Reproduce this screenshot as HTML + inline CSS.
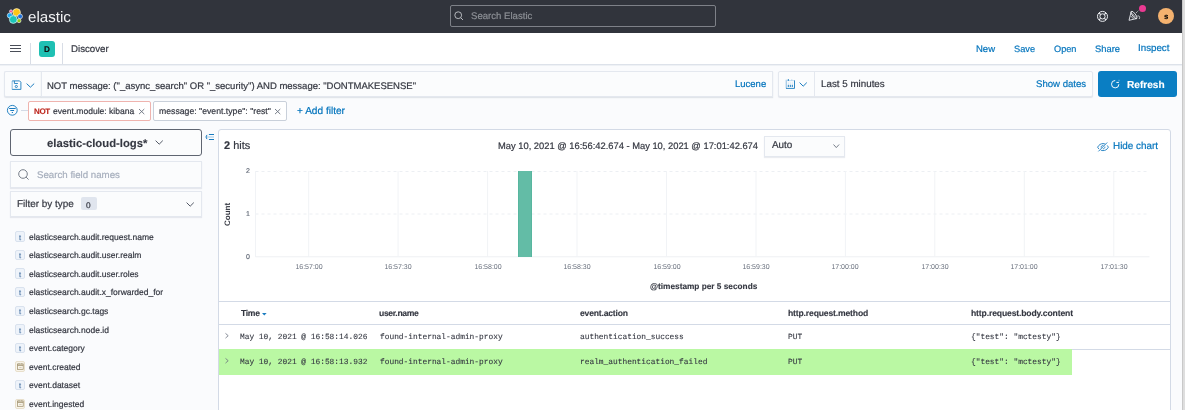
<!DOCTYPE html>
<html><head><meta charset="utf-8">
<style>
*{box-sizing:border-box;margin:0;padding:0}
html,body{width:1185px;height:410px;overflow:hidden;background:#fafbfd;font-family:"Liberation Sans",sans-serif;color:#343741}
.a{position:absolute}
.t{position:absolute;white-space:pre;line-height:1;will-change:transform;text-rendering:geometricPrecision}
svg{position:absolute;overflow:visible}
</style></head><body>
<div class="a" style="left:0px;top:0px;width:1185px;height:33px;background:#31343c;"></div>
<svg style="left:7px;top:8px" width="16" height="16" viewBox="0 0 16 16" stroke="#fff" stroke-width="0.6">
<circle cx="9.65" cy="4.4" r="3.8" fill="#fec514"/>
<circle cx="4" cy="3.3" r="1.5" fill="#f04e98"/>
<circle cx="13.1" cy="8.4" r="2.4" fill="#1f6fd6"/>
<circle cx="12" cy="12.7" r="2" fill="#93c90e"/>
<circle cx="2.9" cy="7.5" r="2.6" fill="#1ba9f5"/>
<circle cx="6.3" cy="11.5" r="3.9" fill="#1cc6b9"/>
</svg>
<div class="t" style="left:28.10px;top:9.72px;font-size:15.1px;color:#f2f3f5;font-weight:400;font-family:'Liberation Sans';-webkit-text-stroke:0.2px #f2f3f5;-webkit-text-stroke:0">elastic</div>
<div class="a" style="left:450px;top:5px;width:266px;height:22px;background:transparent;border:1px solid #7e8188;border-radius:2px"></div>
<svg style="left:454px;top:11px" width="10" height="10" viewBox="0 0 10 10"><circle cx="4.2" cy="4.2" r="3.4" fill="none" stroke="#b5b8bd" stroke-width="1"/><line x1="6.7" y1="6.7" x2="9" y2="9" stroke="#b5b8bd" stroke-width="1"/></svg>
<div class="t" style="left:470.80px;top:11.97px;font-size:9.6px;color:#8c8f95;font-weight:400;font-family:'Liberation Sans';-webkit-text-stroke:0.2px #8c8f95;">Search Elastic</div>
<svg style="left:1096px;top:10px" width="13" height="13" viewBox="0 0 13 13" fill="none" stroke="#eceef2"><circle cx="6.5" cy="6.4" r="5" stroke-width="1"/><circle cx="6.5" cy="6.4" r="2.6" stroke-width="1"/>
<path d="M3 2.9 L4.6 4.5 M10 2.9 L8.4 4.5 M3 9.9 L4.6 8.3 M10 9.9 L8.4 8.3" stroke-width="1.1"/></svg>
<svg style="left:1128px;top:9px" width="14" height="13" viewBox="0 0 14 13" fill="none" stroke="#e8eaee" stroke-width="0.9" stroke-linejoin="round">
<path d="M3.2 2.6 L1 11.3 L8.9 9.5"/>
<ellipse cx="6" cy="6" rx="4.5" ry="1.6" transform="rotate(53 6 6)"/>
<path d="M2.8 7 L5.6 10 M4.2 4.4 L7.8 8.6" stroke-width="0.8"/>
<path d="M8 4 L10.5 1.5" stroke-width="0.8" stroke-dasharray="1.2 0.8"/>
<path d="M9.5 7 C11 6.6 12.4 7.6 11.2 10" stroke-width="0.8"/>
</svg>
<div class="a" style="left:1138.5px;top:4.7px;width:7.0px;height:6.999999999999999px;background:#ea3a92;border-radius:50%"></div>
<div class="a" style="left:1157.8px;top:7.6px;width:16.40000000000009px;height:16.4px;background:#f4b26f;border-radius:50%"></div>
<div class="t" style="left:1163.90px;top:12.90px;font-size:7.8px;color:#000;font-weight:700;font-family:'Liberation Sans';-webkit-text-stroke:0.12px #000;">s</div>
<div class="a" style="left:0px;top:33px;width:1185px;height:31px;background:#fff;"></div>
<div class="a" style="left:0px;top:64px;width:1185px;height:1px;background:#dde2ea;"></div>
<div class="a" style="left:0px;top:65px;width:1185px;height:1px;background:#eef1f5;"></div>
<div class="a" style="left:10px;top:44.5px;width:11px;height:1.2000000000000028px;background:#4a4e58;"></div>
<div class="a" style="left:10px;top:47.8px;width:11px;height:1.2000000000000028px;background:#4a4e58;"></div>
<div class="a" style="left:10px;top:51.1px;width:11px;height:1.2000000000000028px;background:#4a4e58;"></div>
<div class="a" style="left:30px;top:43px;width:1px;height:21px;background:#d8dde6;"></div>
<div class="a" style="left:39px;top:41px;width:16px;height:16px;background:#1fc0b3;border-radius:3px"></div>
<div class="t" style="left:43.80px;top:45.56px;font-size:8.2px;color:#111;font-weight:700;font-family:'Liberation Sans';-webkit-text-stroke:0.12px #111;">D</div>
<div class="a" style="left:62px;top:43px;width:1px;height:21px;background:#d8dde6;"></div>
<div class="t" style="left:71.40px;top:44.89px;font-size:9.7px;color:#343741;font-weight:400;font-family:'Liberation Sans';-webkit-text-stroke:0.2px #343741;">Discover</div>
<div class="t" style="left:976.30px;top:44.56px;font-size:9.5px;color:#0575bd;font-weight:400;font-family:'Liberation Sans';-webkit-text-stroke:0.2px #0575bd;">New</div>
<div class="t" style="left:1013.90px;top:44.77px;font-size:9.25px;color:#0575bd;font-weight:400;font-family:'Liberation Sans';-webkit-text-stroke:0.2px #0575bd;">Save</div>
<div class="t" style="left:1053.80px;top:44.81px;font-size:9.2px;color:#0575bd;font-weight:400;font-family:'Liberation Sans';-webkit-text-stroke:0.2px #0575bd;">Open</div>
<div class="t" style="left:1095.00px;top:44.69px;font-size:9.35px;color:#0575bd;font-weight:400;font-family:'Liberation Sans';-webkit-text-stroke:0.2px #0575bd;">Share</div>
<div class="t" style="left:1138.30px;top:44.35px;font-size:9.75px;color:#0575bd;font-weight:400;font-family:'Liberation Sans';-webkit-text-stroke:0.2px #0575bd;">Inspect</div>
<div class="a" style="left:4px;top:71px;width:37px;height:26px;background:#fbfcfd;border:1px solid #e4e8ef;border-right:none;border-radius:2px 0 0 2px;box-shadow:0 1px 1px rgba(152,162,179,.25)"></div>
<svg style="left:11px;top:80px" width="11" height="10" viewBox="0 0 11 10" fill="none" stroke-width="0.9"><path d="M1.2 0.9 V9.4" stroke="#a9cde8" stroke-width="1.4"/><path d="M1.2 0.9 H8.6 L9.9 2.2 V9.4 H1.2" stroke="#1a7cc0"/><path d="M3.4 0.9 V3.5 H6.9" stroke="#1a7cc0"/><circle cx="5.3" cy="6.5" r="1.1" stroke="#1a7cc0"/></svg>
<svg style="left:26px;top:83px" width="9" height="5" viewBox="0 0 9 5"><path d="M0.6 0.6 L4.4 4.2 L8.2 0.6" fill="none" stroke="#1a7cc0" stroke-width="1"/></svg>
<div class="a" style="left:41px;top:71px;width:732px;height:26px;background:#fbfcfd;border:1px solid #e4e8ef;box-shadow:0 1px 1px rgba(152,162,179,.25)"></div>
<div class="t" style="left:47.00px;top:81.96px;font-size:9.5px;color:#343741;font-weight:400;font-family:'Liberation Sans';-webkit-text-stroke:0.2px #343741;">NOT message: (&quot;_async_search&quot; OR &quot;_security&quot;) AND message: &quot;DONTMAKESENSE&quot;</div>
<div class="t" style="left:735.10px;top:80.06px;font-size:9.5px;color:#0575bd;font-weight:400;font-family:'Liberation Sans';-webkit-text-stroke:0.2px #0575bd;">Lucene</div>
<div class="a" style="left:778px;top:71px;width:315px;height:26px;background:#fbfcfd;border:1px solid #e4e8ef;border-radius:2px;box-shadow:0 1px 1px rgba(152,162,179,.25)"></div>
<div class="a" style="left:814px;top:71px;width:1px;height:26px;background:#e4e8ef;"></div>
<svg style="left:785px;top:79px" width="11" height="10" viewBox="0 0 11 10" fill="none" stroke-width="0.9"><path d="M1.3 0.8 V9.3" stroke="#a9cde8" stroke-width="1.4"/><path d="M1 1.6 H9.4" stroke="#bcd8ee"/><path d="M9.5 1.4 V9.4 H1" stroke="#1a7cc0"/><path d="M3.3 0.1 V1.9" stroke="#1a7cc0" stroke-width="1"/><path d="M6.8 0.4 V1.9" stroke="#a9cde8" stroke-width="1"/><path d="M3.3 3.2 V5.4 M5.3 3.2 V5.4 M7.3 3.2 V5.4" stroke="#d5e6f4" stroke-width="0.8"/><path d="M3.3 6.2 V7.6 M5.3 6.2 V7.6 M7.3 6.2 V7.6" stroke="#1a7cc0" stroke-width="1" stroke-linecap="round"/></svg>
<svg style="left:799px;top:82px" width="9" height="5" viewBox="0 0 9 5"><path d="M0.6 0.6 L4.2 4.2 L7.8 0.6" fill="none" stroke="#1a7cc0" stroke-width="1"/></svg>
<div class="t" style="left:820.90px;top:79.50px;font-size:9.8px;color:#343741;font-weight:400;font-family:'Liberation Sans';-webkit-text-stroke:0.2px #343741;">Last 5 minutes</div>
<div class="t" style="left:1035.80px;top:79.67px;font-size:9.6px;color:#0575bd;font-weight:400;font-family:'Liberation Sans';-webkit-text-stroke:0.2px #0575bd;">Show dates</div>
<div class="a" style="left:1098px;top:71px;width:79px;height:26px;background:#0a7ec3;border-radius:3px"></div>
<svg style="left:1110px;top:79px" width="11" height="10" viewBox="0 0 11 10" fill="none"><path d="M5.2 1.5 A3.7 3.7 0 1 0 8.9 5.2" stroke="#fff" stroke-width="0.95"/><path d="M6.4 3.4 H8.9" stroke="#fff" stroke-width="1"/><path d="M9 0.8 V2.2" stroke="#fff" stroke-width="0.8" opacity="0.6"/></svg>
<div class="t" style="left:1126.50px;top:80.95px;font-size:10.1px;color:#fff;font-weight:700;font-family:'Liberation Sans';-webkit-text-stroke:0.12px #fff;">Refresh</div>
<svg style="left:7px;top:104px" width="11" height="12" viewBox="0 0 11 12" fill="none" stroke="#1a7cc0"><circle cx="5.3" cy="6.3" r="4.9" stroke-width="0.95"/><path d="M2.1 4.5 H8.7 M3.3 6.5 H7.1 M4.8 8.5 H6" stroke-width="1"/></svg>
<div class="a" style="left:21px;top:110px;width:7px;height:1px;background:#d3dae6;"></div>
<div class="a" style="left:28px;top:101px;width:123px;height:20px;background:#fff;border:1px solid #efb3ae;border-radius:2px"></div>
<div class="t" style="left:33.60px;top:107.73px;font-size:8.0px;color:#bd271e;font-weight:700;font-family:'Liberation Sans';-webkit-text-stroke:0.12px #bd271e;letter-spacing:-0.4px">NOT</div>
<div class="t" style="left:53.30px;top:107.26px;font-size:8.55px;color:#343741;font-weight:400;font-family:'Liberation Sans';-webkit-text-stroke:0.2px #343741;">event.module: kibana</div>
<svg style="left:138.5px;top:108.8px" width="5.300000000000011" height="5.1000000000000085" viewBox="0 0 5.300000000000011 5.1000000000000085"><path d="M0 0 L5.300000000000011 5.1000000000000085 M5.300000000000011 0 L0 5.1000000000000085" stroke="#69707d" stroke-width="0.9"/></svg>
<div class="a" style="left:153px;top:101px;width:134px;height:20px;background:#fff;border:1px solid #c9d0da;border-radius:2px"></div>
<div class="t" style="left:158.80px;top:107.14px;font-size:8.7px;color:#343741;font-weight:400;font-family:'Liberation Sans';-webkit-text-stroke:0.2px #343741;">message: &quot;event.type&quot;: &quot;rest&quot;</div>
<svg style="left:275.4px;top:108.8px" width="5.300000000000011" height="5.1000000000000085" viewBox="0 0 5.300000000000011 5.1000000000000085"><path d="M0 0 L5.300000000000011 5.1000000000000085 M5.300000000000011 0 L0 5.1000000000000085" stroke="#69707d" stroke-width="0.9"/></svg>
<div class="t" style="left:296.80px;top:106.85px;font-size:10.1px;color:#0575bd;font-weight:400;font-family:'Liberation Sans';-webkit-text-stroke:0.2px #0575bd;">+ Add filter</div>
<div class="a" style="left:10px;top:129px;width:192px;height:27px;background:#fbfcfd;border:1px solid #5f6571;border-radius:3px"></div>
<div class="t" style="left:47.00px;top:139.03px;font-size:11.3px;color:#343741;font-weight:700;font-family:'Liberation Sans';-webkit-text-stroke:0.12px #343741;">elastic-cloud-logs*</div>
<svg style="left:155px;top:140px" width="9" height="5" viewBox="0 0 9 5"><path d="M0.6 0.6 L4.2 4.2 L7.8 0.6" fill="none" stroke="#535966" stroke-width="1"/></svg>
<svg style="left:204px;top:133px" width="11" height="8" viewBox="0 0 11 8" fill="none"><path d="M4.9 1.5 H10 M4.9 6.5 H10" stroke="#1a7cc0" stroke-width="1"/><path d="M2.2 4 H10" stroke="#9fc8e6" stroke-width="1"/><path d="M3 1.9 Q0.9 4 3 6.1" stroke="#1a7cc0" stroke-width="1"/></svg>
<div class="a" style="left:10px;top:161px;width:192px;height:27px;background:#fbfcfd;border:1px solid #e4e8ef;box-shadow:0 1px 1px rgba(152,162,179,.2)"></div>
<svg style="left:17.5px;top:169px" width="12" height="12" viewBox="0 0 12 12"><circle cx="5" cy="5" r="4.3" fill="none" stroke="#69707d" stroke-width="0.9"/><line x1="8.1" y1="8.1" x2="10.6" y2="10.6" stroke="#69707d" stroke-width="0.9"/></svg>
<div class="t" style="left:36.60px;top:171.09px;font-size:9.7px;color:#a7afbd;font-weight:400;font-family:'Liberation Sans';-webkit-text-stroke:0.2px #a7afbd;">Search field names</div>
<div class="a" style="left:10px;top:191px;width:192px;height:26px;background:#fbfcfd;border:1px solid #e4e8ef;box-shadow:0 1px 1px rgba(152,162,179,.2)"></div>
<div class="t" style="left:17.00px;top:199.78px;font-size:9.95px;color:#343741;font-weight:400;font-family:'Liberation Sans';-webkit-text-stroke:0.2px #343741;">Filter by type</div>
<div class="a" style="left:81.3px;top:197.3px;width:15.299999999999997px;height:13.199999999999989px;background:#e0e5ee;border-radius:2px"></div>
<div class="t" style="left:86.20px;top:200.87px;font-size:8.3px;color:#343741;font-weight:400;font-family:'Liberation Sans';-webkit-text-stroke:0.2px #343741;">0</div>
<svg style="left:186px;top:202px" width="9" height="5" viewBox="0 0 9 5"><path d="M0.6 0.6 L4.2 4.2 L7.8 0.6" fill="none" stroke="#535966" stroke-width="1"/></svg>
<div class="a" style="left:15.1px;top:231.1px;width:10.4px;height:10.5px;background:#eef3fa;border:1px solid #d9e2ee;border-radius:2px"></div>
<div class="t" style="left:18.60px;top:233.55px;font-size:7.5px;color:#5d83ad;font-weight:400;font-family:'Liberation Sans';-webkit-text-stroke:0.2px #5d83ad;">t</div>
<div class="t" style="left:28.80px;top:232.50px;font-size:8.5px;color:#343741;font-weight:400;font-family:'Liberation Sans';-webkit-text-stroke:0.2px #343741;">elasticsearch.audit.request.name</div>
<div class="a" style="left:15.1px;top:249.7px;width:10.4px;height:10.5px;background:#eef3fa;border:1px solid #d9e2ee;border-radius:2px"></div>
<div class="t" style="left:18.60px;top:252.15px;font-size:7.5px;color:#5d83ad;font-weight:400;font-family:'Liberation Sans';-webkit-text-stroke:0.2px #5d83ad;">t</div>
<div class="t" style="left:28.80px;top:251.10px;font-size:8.5px;color:#343741;font-weight:400;font-family:'Liberation Sans';-webkit-text-stroke:0.2px #343741;">elasticsearch.audit.user.realm</div>
<div class="a" style="left:15.1px;top:268.3px;width:10.4px;height:10.5px;background:#eef3fa;border:1px solid #d9e2ee;border-radius:2px"></div>
<div class="t" style="left:18.60px;top:270.75px;font-size:7.5px;color:#5d83ad;font-weight:400;font-family:'Liberation Sans';-webkit-text-stroke:0.2px #5d83ad;">t</div>
<div class="t" style="left:28.80px;top:269.70px;font-size:8.5px;color:#343741;font-weight:400;font-family:'Liberation Sans';-webkit-text-stroke:0.2px #343741;">elasticsearch.audit.user.roles</div>
<div class="a" style="left:15.1px;top:286.9px;width:10.4px;height:10.5px;background:#eef3fa;border:1px solid #d9e2ee;border-radius:2px"></div>
<div class="t" style="left:18.60px;top:289.35px;font-size:7.5px;color:#5d83ad;font-weight:400;font-family:'Liberation Sans';-webkit-text-stroke:0.2px #5d83ad;">t</div>
<div class="t" style="left:28.80px;top:288.30px;font-size:8.5px;color:#343741;font-weight:400;font-family:'Liberation Sans';-webkit-text-stroke:0.2px #343741;">elasticsearch.audit.x_forwarded_for</div>
<div class="a" style="left:15.1px;top:305.5px;width:10.4px;height:10.5px;background:#eef3fa;border:1px solid #d9e2ee;border-radius:2px"></div>
<div class="t" style="left:18.60px;top:307.95px;font-size:7.5px;color:#5d83ad;font-weight:400;font-family:'Liberation Sans';-webkit-text-stroke:0.2px #5d83ad;">t</div>
<div class="t" style="left:28.80px;top:306.90px;font-size:8.5px;color:#343741;font-weight:400;font-family:'Liberation Sans';-webkit-text-stroke:0.2px #343741;">elasticsearch.gc.tags</div>
<div class="a" style="left:15.1px;top:324.09999999999997px;width:10.4px;height:10.5px;background:#eef3fa;border:1px solid #d9e2ee;border-radius:2px"></div>
<div class="t" style="left:18.60px;top:326.55px;font-size:7.5px;color:#5d83ad;font-weight:400;font-family:'Liberation Sans';-webkit-text-stroke:0.2px #5d83ad;">t</div>
<div class="t" style="left:28.80px;top:325.50px;font-size:8.5px;color:#343741;font-weight:400;font-family:'Liberation Sans';-webkit-text-stroke:0.2px #343741;">elasticsearch.node.id</div>
<div class="a" style="left:15.1px;top:342.7px;width:10.4px;height:10.5px;background:#eef3fa;border:1px solid #d9e2ee;border-radius:2px"></div>
<div class="t" style="left:18.60px;top:345.15px;font-size:7.5px;color:#5d83ad;font-weight:400;font-family:'Liberation Sans';-webkit-text-stroke:0.2px #5d83ad;">t</div>
<div class="t" style="left:28.80px;top:344.10px;font-size:8.5px;color:#343741;font-weight:400;font-family:'Liberation Sans';-webkit-text-stroke:0.2px #343741;">event.category</div>
<div class="a" style="left:15.1px;top:361.3px;width:10.4px;height:10.5px;background:#f8f4ea;border:1px solid #e8dfcb;border-radius:2px"></div>
<svg style="left:17px;top:363.20px" width="7" height="7" viewBox="0 0 7 7" fill="none"><rect x="0.6" y="1" width="5.6" height="5.3" stroke="#9a8a66" stroke-width="0.7"/><path d="M0.6 2.3 H6.2" stroke="#9a8a66" stroke-width="0.9"/><path d="M2 0.2 V1.2 M4.8 0.2 V1.2" stroke="#9a8a66" stroke-width="0.7"/><path d="M2.2 4.5 H4.6" stroke="#c9bda0" stroke-width="0.7"/></svg>
<div class="t" style="left:28.80px;top:362.70px;font-size:8.5px;color:#343741;font-weight:400;font-family:'Liberation Sans';-webkit-text-stroke:0.2px #343741;">event.created</div>
<div class="a" style="left:15.1px;top:379.90000000000003px;width:10.4px;height:10.5px;background:#eef3fa;border:1px solid #d9e2ee;border-radius:2px"></div>
<div class="t" style="left:18.60px;top:382.35px;font-size:7.5px;color:#5d83ad;font-weight:400;font-family:'Liberation Sans';-webkit-text-stroke:0.2px #5d83ad;">t</div>
<div class="t" style="left:28.80px;top:381.30px;font-size:8.5px;color:#343741;font-weight:400;font-family:'Liberation Sans';-webkit-text-stroke:0.2px #343741;">event.dataset</div>
<div class="a" style="left:15.1px;top:398.5px;width:10.4px;height:10.5px;background:#f8f4ea;border:1px solid #e8dfcb;border-radius:2px"></div>
<svg style="left:17px;top:400.40px" width="7" height="7" viewBox="0 0 7 7" fill="none"><rect x="0.6" y="1" width="5.6" height="5.3" stroke="#9a8a66" stroke-width="0.7"/><path d="M0.6 2.3 H6.2" stroke="#9a8a66" stroke-width="0.9"/><path d="M2 0.2 V1.2 M4.8 0.2 V1.2" stroke="#9a8a66" stroke-width="0.7"/><path d="M2.2 4.5 H4.6" stroke="#c9bda0" stroke-width="0.7"/></svg>
<div class="t" style="left:28.80px;top:399.90px;font-size:8.5px;color:#343741;font-weight:400;font-family:'Liberation Sans';-webkit-text-stroke:0.2px #343741;">event.ingested</div>
<div class="a" style="left:218px;top:129px;width:953px;height:291px;background:#fff;border:1px solid #d3dae6;border-radius:3px"></div>
<div class="t" style="left:224.30px;top:140.93px;font-size:10.95px;color:#343741;font-weight:400;font-family:'Liberation Sans';-webkit-text-stroke:0.2px #343741;"><b>2</b> hits</div>
<div class="t" style="left:497.80px;top:141.69px;font-size:9.35px;color:#343741;font-weight:400;font-family:'Liberation Sans';-webkit-text-stroke:0.2px #343741;">May 10, 2021 @ 16:56:42.674 - May 10, 2021 @ 17:01:42.674</div>
<div class="a" style="left:764px;top:136px;width:81px;height:21px;background:#fbfcfd;border:1px solid #e4e8ef;box-shadow:0 1px 1px rgba(152,162,179,.2)"></div>
<div class="t" style="left:771.80px;top:141.42px;font-size:9.9px;color:#343741;font-weight:400;font-family:'Liberation Sans';-webkit-text-stroke:0.2px #343741;">Auto</div>
<svg style="left:833px;top:144px" width="7" height="5" viewBox="0 0 7 5"><path d="M0.5 0.5 L3.3 3.6 L6.1 0.5" fill="none" stroke="#69707d" stroke-width="0.9"/></svg>
<svg style="left:1096.5px;top:141.5px" width="12" height="10" viewBox="0 0 12 10" fill="none" stroke="#1a7cc0" stroke-width="0.9"><path d="M0.6 5.2 C2 2.6 4 1.6 6 1.6 C6.8 1.6 7.6 1.8 8.3 2.1 M10.2 3.4 C10.7 3.9 11.1 4.5 11.4 5.2 C10 7.8 8 8.6 6 8.6 C5.2 8.6 4.5 8.5 3.8 8.2 M1.9 7 C1.4 6.5 1 5.9 0.6 5.2"/><path d="M4.2 5.6 C4 4.2 5 3.3 6.3 3.4 M7.9 4.6 C8 6 7 6.9 5.8 6.8"/><line x1="1.4" y1="9.4" x2="10.2" y2="0.5"/></svg>
<div class="t" style="left:1112.90px;top:141.62px;font-size:9.9px;color:#0575bd;font-weight:400;font-family:'Liberation Sans';-webkit-text-stroke:0.2px #0575bd;">Hide chart</div>
<svg style="left:0;top:0" width="1185" height="410" viewBox="0 0 1185 410"><line x1="255.5" y1="171.5" x2="1149.5" y2="171.5" stroke="#eceff3" stroke-width="1" stroke-dasharray="3 3"/><line x1="255.5" y1="214" x2="1149.5" y2="214" stroke="#eceff3" stroke-width="1" stroke-dasharray="3 3"/><line x1="255.5" y1="256.8" x2="1149.5" y2="256.8" stroke="#eef0f3" stroke-width="1"/><line x1="255.5" y1="171" x2="255.5" y2="257" stroke="#f1f3f6" stroke-width="1"/><line x1="308.7" y1="171" x2="308.7" y2="257" stroke="#f1f3f6" stroke-width="1"/><line x1="398.1" y1="171" x2="398.1" y2="257" stroke="#f1f3f6" stroke-width="1"/><line x1="487.6" y1="171" x2="487.6" y2="257" stroke="#f1f3f6" stroke-width="1"/><line x1="577.0" y1="171" x2="577.0" y2="257" stroke="#f1f3f6" stroke-width="1"/><line x1="666.5" y1="171" x2="666.5" y2="257" stroke="#f1f3f6" stroke-width="1"/><line x1="756.0" y1="171" x2="756.0" y2="257" stroke="#f1f3f6" stroke-width="1"/><line x1="845.4" y1="171" x2="845.4" y2="257" stroke="#f1f3f6" stroke-width="1"/><line x1="934.8" y1="171" x2="934.8" y2="257" stroke="#f1f3f6" stroke-width="1"/><line x1="1024.3" y1="171" x2="1024.3" y2="257" stroke="#f1f3f6" stroke-width="1"/><line x1="1113.8" y1="171" x2="1113.8" y2="257" stroke="#f1f3f6" stroke-width="1"/></svg>
<div class="a" style="left:517.6px;top:171.2px;width:14.600000000000023px;height:85.80000000000001px;background:#63bca6;border-left:1px solid #57b69f;border-right:1px solid #57b69f"></div>
<div class="t" style="left:245.60px;top:167.57px;font-size:7px;color:#69707d;font-weight:400;font-family:'Liberation Sans';-webkit-text-stroke:0.2px #69707d;">2</div>
<div class="t" style="left:245.60px;top:211.07px;font-size:7px;color:#69707d;font-weight:400;font-family:'Liberation Sans';-webkit-text-stroke:0.2px #69707d;">1</div>
<div class="t" style="left:245.60px;top:253.97px;font-size:7px;color:#69707d;font-weight:400;font-family:'Liberation Sans';-webkit-text-stroke:0.2px #69707d;">0</div>
<div class="t" style="left:224px;top:226px;font-size:8px;font-weight:700;color:#343741;transform:rotate(-90deg);transform-origin:0 0">Count</div>
<div class="t" style="left:268.70px;width:80px;text-align:center;top:263.77px;font-size:7px;color:#69707d">16:57:00</div>
<div class="t" style="left:358.15px;width:80px;text-align:center;top:263.77px;font-size:7px;color:#69707d">16:57:30</div>
<div class="t" style="left:447.60px;width:80px;text-align:center;top:263.77px;font-size:7px;color:#69707d">16:58:00</div>
<div class="t" style="left:537.05px;width:80px;text-align:center;top:263.77px;font-size:7px;color:#69707d">16:58:30</div>
<div class="t" style="left:626.50px;width:80px;text-align:center;top:263.77px;font-size:7px;color:#69707d">16:59:00</div>
<div class="t" style="left:715.95px;width:80px;text-align:center;top:263.77px;font-size:7px;color:#69707d">16:59:30</div>
<div class="t" style="left:805.40px;width:80px;text-align:center;top:263.77px;font-size:7px;color:#69707d">17:00:00</div>
<div class="t" style="left:894.85px;width:80px;text-align:center;top:263.77px;font-size:7px;color:#69707d">17:00:30</div>
<div class="t" style="left:984.30px;width:80px;text-align:center;top:263.77px;font-size:7px;color:#69707d">17:01:00</div>
<div class="t" style="left:1073.75px;width:80px;text-align:center;top:263.77px;font-size:7px;color:#69707d">17:01:30</div>
<div class="t" style="left:649.90px;top:282.60px;font-size:8.27px;color:#343741;font-weight:700;font-family:'Liberation Sans';-webkit-text-stroke:0.12px #343741;">@timestamp per 5 seconds</div>
<div class="a" style="left:219px;top:301px;width:951px;height:1px;background:#d3dae6;"></div>
<div class="a" style="left:219px;top:324px;width:951px;height:1px;background:#d3dae6;"></div>
<div class="a" style="left:219px;top:349px;width:951px;height:1px;background:#d3dae6;"></div>
<div class="a" style="left:219px;top:349px;width:853px;height:26px;background:#baf8a3;"></div>
<div class="t" style="left:240.70px;top:309.12px;font-size:8.6px;color:#343741;font-weight:700;font-family:'Liberation Sans';-webkit-text-stroke:0.12px #343741;letter-spacing:-0.309px">Time</div>
<div class="t" style="left:379.20px;top:309.12px;font-size:8.6px;color:#343741;font-weight:700;font-family:'Liberation Sans';-webkit-text-stroke:0.12px #343741;letter-spacing:-0.334px">user.name</div>
<div class="t" style="left:579.90px;top:309.12px;font-size:8.6px;color:#343741;font-weight:700;font-family:'Liberation Sans';-webkit-text-stroke:0.12px #343741;letter-spacing:-0.191px">event.action</div>
<div class="t" style="left:787.90px;top:309.12px;font-size:8.6px;color:#343741;font-weight:700;font-family:'Liberation Sans';-webkit-text-stroke:0.12px #343741;letter-spacing:-0.156px">http.request.method</div>
<div class="t" style="left:970.80px;top:309.12px;font-size:8.6px;color:#343741;font-weight:700;font-family:'Liberation Sans';-webkit-text-stroke:0.12px #343741;letter-spacing:-0.138px">http.request.body.content</div>
<svg style="left:262px;top:313.4px" width="5" height="3" viewBox="0 0 5 3"><path d="M0 0 H4.6 L2.3 2.5 Z" fill="#1a7cc0"/></svg>
<svg style="left:224.8px;top:332.7px" width="4" height="5.5" viewBox="0 0 4 5.5"><path d="M0.5 0.4 L3.2 2.7 L0.5 5.1" fill="none" stroke="#69707d" stroke-width="0.8"/></svg>
<div class="t" style="left:240.20px;top:333.85px;font-size:7.86px;color:#343741;font-weight:400;font-family:'Liberation Mono';-webkit-text-stroke:0.2px #343741;-webkit-text-stroke:0.1px #343741">May 10, 2021 @ 16:58:14.026</div>
<div class="t" style="left:379.50px;top:333.85px;font-size:7.86px;color:#343741;font-weight:400;font-family:'Liberation Mono';-webkit-text-stroke:0.2px #343741;-webkit-text-stroke:0.1px #343741">found-internal-admin-proxy</div>
<div class="t" style="left:579.90px;top:333.85px;font-size:7.86px;color:#343741;font-weight:400;font-family:'Liberation Mono';-webkit-text-stroke:0.2px #343741;-webkit-text-stroke:0.1px #343741">authentication_success</div>
<div class="t" style="left:787.90px;top:333.85px;font-size:7.86px;color:#343741;font-weight:400;font-family:'Liberation Mono';-webkit-text-stroke:0.2px #343741;-webkit-text-stroke:0.1px #343741">PUT</div>
<div class="t" style="left:970.80px;top:333.85px;font-size:7.86px;color:#343741;font-weight:400;font-family:'Liberation Mono';-webkit-text-stroke:0.2px #343741;-webkit-text-stroke:0.1px #343741">{&quot;test&quot;: &quot;mctesty&quot;}</div>
<svg style="left:224.8px;top:357.5px" width="4" height="5.5" viewBox="0 0 4 5.5"><path d="M0.5 0.4 L3.2 2.7 L0.5 5.1" fill="none" stroke="#69707d" stroke-width="0.8"/></svg>
<div class="t" style="left:240.20px;top:358.85px;font-size:7.86px;color:#343741;font-weight:400;font-family:'Liberation Mono';-webkit-text-stroke:0.2px #343741;-webkit-text-stroke:0.1px #343741">May 10, 2021 @ 16:58:13.932</div>
<div class="t" style="left:379.50px;top:358.85px;font-size:7.86px;color:#343741;font-weight:400;font-family:'Liberation Mono';-webkit-text-stroke:0.2px #343741;-webkit-text-stroke:0.1px #343741">found-internal-admin-proxy</div>
<div class="t" style="left:579.90px;top:358.85px;font-size:7.86px;color:#343741;font-weight:400;font-family:'Liberation Mono';-webkit-text-stroke:0.2px #343741;-webkit-text-stroke:0.1px #343741">realm_authentication_failed</div>
<div class="t" style="left:787.90px;top:358.85px;font-size:7.86px;color:#343741;font-weight:400;font-family:'Liberation Mono';-webkit-text-stroke:0.2px #343741;-webkit-text-stroke:0.1px #343741">PUT</div>
<div class="t" style="left:970.80px;top:358.85px;font-size:7.86px;color:#343741;font-weight:400;font-family:'Liberation Mono';-webkit-text-stroke:0.2px #343741;-webkit-text-stroke:0.1px #343741">{&quot;test&quot;: &quot;mctesty&quot;}</div>
<div class="a" style="left:1182px;top:0px;width:1px;height:410px;background:#c9c9c9;"></div>
<div class="a" style="left:1183px;top:0px;width:2px;height:410px;background:#dedede;"></div>
</body></html>
